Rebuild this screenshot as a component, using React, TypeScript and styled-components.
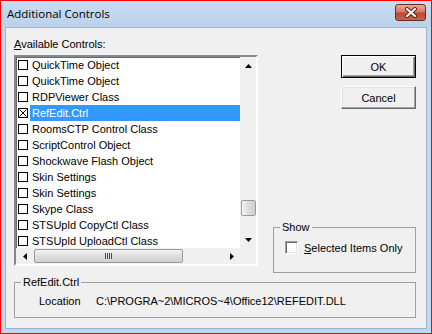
import React from "react";
import styled, { createGlobalStyle } from "styled-components";

const Global = createGlobalStyle`
  html, body { margin: 0; padding: 0; background: #ffffff; }
  * { box-sizing: border-box; }
`;

const UI = `"Liberation Sans", Arial, sans-serif`;

const Window = styled.div`
  width: 432px;
  height: 334px;
  border: 1px solid #ff0000;
  background: #c3d7ed;
  display: flex;
  flex-direction: column;
  font-family: ${UI};
  font-size: 11px;
  color: #000;
`;

const TitleBar = styled.div`
  height: 26px;
  flex: none;
  display: flex;
  align-items: center;
  justify-content: space-between;
  padding: 0 5px 0 6px;
  background: linear-gradient(#c8dcf2, #bcd2ea);
`;

const Title = styled.span`
  font-family: "Open Sans", "Liberation Sans", sans-serif;
  font-size: 11.5px;
  color: #000;
  margin-top: -2px;
`;

const CloseButton = styled.div`
  width: 31px;
  height: 17px;
  margin-top: -4px;
  border: 1px solid #6d2a22;
  border-radius: 3px;
  background: linear-gradient(#e8a698 0%, #d77a68 45%, #c0472f 55%, #c86450 100%);
  display: flex;
  align-items: center;
  justify-content: center;
`;

const Client = styled.div`
  flex: 1;
  margin: 0 4px 4px 4px;
  background: #f0f0f0;
  border: 1px solid #9db3cf;
  padding: 10px 10px 0 8px;
  display: flex;
  flex-direction: column;
`;

const TopRow = styled.div`
  display: flex;
  justify-content: space-between;
  height: 235px;
`;

const LeftCol = styled.div`
  width: 244px;
  display: flex;
  flex-direction: column;
`;

const Label = styled.div`
  height: 13px;
  line-height: 13px;
  margin-bottom: 4px;
  u { text-decoration: underline; }
`;

const ListBox = styled.div`
  height: 211px;
  border: 2px solid;
  border-color: #828790 #ffffff #ffffff #828790;
  box-shadow: inset 1px 1px 0 #696969;
  display: grid;
  grid-template-columns: 1fr 16px;
  grid-template-rows: 1fr 16px;
  background: #fff;
`;

const Rows = styled.div`
  display: flex;
  flex-direction: column;
  overflow: hidden;
`;

const Row = styled.div`
  height: 16px;
  flex: none;
  display: flex;
  align-items: center;
  padding-left: 2px;
`;

const Box = styled.span`
  width: 10px;
  height: 10px;
  border: 1px solid #000;
  background: #fff;
  flex: none;
  display: flex;
  align-items: center;
  justify-content: center;
`;

const ItemText = styled.span<{ $sel?: boolean }>`
  flex: 1;
  height: 16px;
  line-height: 16px;
  margin-left: 2px;
  padding-left: 2px;
  white-space: nowrap;
  background: ${(p) => (p.$sel ? "#3399ff" : "transparent")};
  color: ${(p) => (p.$sel ? "#fff" : "#000")};
`;

const VScroll = styled.div`
  background: #f0f0f0;
  display: flex;
  flex-direction: column;
  align-items: center;
`;

const HScroll = styled.div`
  background: #f0f0f0;
  display: flex;
  align-items: center;
`;

const Corner = styled.div`
  background: #f0f0f0;
`;

const ArrowCell = styled.div<{ $h?: boolean }>`
  width: ${(p) => (p.$h ? "17px" : "16px")};
  height: ${(p) => (p.$h ? "16px" : "17px")};
  flex: none;
  display: flex;
  align-items: center;
  justify-content: center;
`;

const Track = styled.div<{ $h?: boolean }>`
  flex: 1;
  display: flex;
  flex-direction: ${(p) => (p.$h ? "row" : "column")};
  align-items: center;
`;

const Thumb = styled.div<{ $h?: boolean }>`
  width: ${(p) => (p.$h ? "149px" : "15px")};
  height: ${(p) => (p.$h ? "14px" : "16px")};
  border: 1px solid #9a9a9a;
  border-radius: 2px;
  background: linear-gradient(${(p) => (p.$h ? "180deg" : "90deg")}, #f3f3f3, #dedede 50%, #d0d0d0);
  display: flex;
  align-items: center;
  justify-content: center;
  gap: 1px;
`;

const Grip = styled.span`
  width: 1px;
  height: 6px;
  background: #4a4a4a;
`;

const RightCol = styled.div`
  width: 143px;
  padding-top: 17px;
  display: flex;
  flex-direction: column;
  justify-content: space-between;
  align-items: flex-end;
`;

const Buttons = styled.div`
  display: flex;
  flex-direction: column;
  gap: 8px;
`;

const Button = styled.div<{ $default?: boolean }>`
  width: 75px;
  height: 23px;
  display: flex;
  align-items: center;
  justify-content: center;
  background: #f0f0f0;
  border: 1px solid;
  border-color: ${(p) => (p.$default ? "#000" : "#ffffff #696969 #696969 #ffffff")};
  box-shadow: ${(p) =>
    p.$default
      ? "inset 1px 1px 0 #fff, inset -1px -1px 0 #696969, inset -2px -2px 0 #a0a0a0"
      : "inset -1px -1px 0 #a0a0a0, inset 1px 1px 0 #e3e3e3"};
  font-size: 11px;
`;

const Group = styled.fieldset<{ $w: number; $h: number }>`
  width: ${(p) => p.$w}px;
  height: ${(p) => p.$h}px;
  margin: 0;
  padding: 0;
  border: 1px solid #a0a0a0;
  min-width: 0;
`;

const Legend = styled.legend`
  margin-left: 6px;
  padding: 0 2px;
  line-height: 13px;
  font-size: 11px;
`;

const ShowRow = styled.div`
  display: flex;
  align-items: center;
  gap: 6px;
  padding: 7px 0 0 11px;
  u { text-decoration: underline; }
`;

const BigBox = styled.span`
  width: 13px;
  height: 13px;
  border: 1px solid;
  border-color: #a0a0a0 #fff #fff #a0a0a0;
  box-shadow: inset 1px 1px 0 #696969, inset -1px -1px 0 #e3e3e3;
  background: #fff;
  flex: none;
`;

const BottomGroupWrap = styled.div`
  margin-top: 3px;
`;

const InfoRow = styled.div`
  display: flex;
  padding: 6px 0 0 24px;
  line-height: 13px;
`;

const InfoKey = styled.span`
  width: 57px;
`;

const UpArrow = () => (
  <svg width="7" height="4" viewBox="0 0 7 4"><path d="M3.5 0 L7 4 L0 4 Z" fill="#000" /></svg>
);
const DownArrow = () => (
  <svg width="7" height="4" viewBox="0 0 7 4"><path d="M0 0 L7 0 L3.5 4 Z" fill="#000" /></svg>
);
const LeftArrow = () => (
  <svg width="4" height="7" viewBox="0 0 4 7"><path d="M4 0 L4 7 L0 3.5 Z" fill="#000" /></svg>
);
const RightArrow = () => (
  <svg width="4" height="7" viewBox="0 0 4 7"><path d="M0 0 L4 3.5 L0 7 Z" fill="#000" /></svg>
);

const items = [
  "QuickTime Object",
  "QuickTime Object",
  "RDPViewer Class",
  "RefEdit.Ctrl",
  "RoomsCTP Control Class",
  "ScriptControl Object",
  "Shockwave Flash Object",
  "Skin Settings",
  "Skin Settings",
  "Skype Class",
  "STSUpld CopyCtl Class",
  "STSUpld UploadCtl Class",
];

export default function App() {
  return (
    <>
      <Global />
      <Window>
        <TitleBar>
          <Title>Additional Controls</Title>
          <CloseButton>
            <svg width="14" height="11" viewBox="0 0 14 11">
              <path d="M3 2 L11 9 M11 2 L3 9" stroke="#5a1a14" strokeWidth="4" strokeLinecap="round" />
              <path d="M3 2 L11 9 M11 2 L3 9" stroke="#ffffff" strokeWidth="2.2" strokeLinecap="round" />
            </svg>
          </CloseButton>
        </TitleBar>
        <Client>
          <TopRow>
            <LeftCol>
              <Label>
                <u>A</u>vailable Controls:
              </Label>
              <ListBox>
                <Rows>
                  {items.map((t, i) => (
                    <Row key={i}>
                      <Box>
                        {i === 3 && (
                          <svg width="8" height="8" viewBox="0 0 8 8">
                            <path d="M0.5 0.5 L7.5 7.5 M7.5 0.5 L0.5 7.5" stroke="#000" strokeWidth="1" />
                          </svg>
                        )}
                      </Box>
                      <ItemText $sel={i === 3}>{t}</ItemText>
                    </Row>
                  ))}
                </Rows>
                <VScroll>
                  <ArrowCell><UpArrow /></ArrowCell>
                  <Track>
                    <Thumb style={{ marginTop: 126 }} />
                  </Track>
                  <ArrowCell><DownArrow /></ArrowCell>
                </VScroll>
                <HScroll>
                  <ArrowCell $h><LeftArrow /></ArrowCell>
                  <Track $h>
                    <Thumb $h style={{ marginLeft: 1 }}>
                      <Grip /><Grip /><Grip /><Grip />
                    </Thumb>
                  </Track>
                  <ArrowCell $h><RightArrow /></ArrowCell>
                </HScroll>
                <Corner />
              </ListBox>
            </LeftCol>
            <RightCol>
              <Buttons>
                <Button $default>OK</Button>
                <Button>Cancel</Button>
              </Buttons>
              <Group $w={143} $h={52}>
                <Legend>Show</Legend>
                <ShowRow>
                  <BigBox />
                  <span>
                    <u>S</u>elected Items Only
                  </span>
                </ShowRow>
              </Group>
            </RightCol>
          </TopRow>
          <BottomGroupWrap>
            <Group $w={402} $h={42}>
              <Legend>RefEdit.Ctrl</Legend>
              <InfoRow>
                <InfoKey>Location</InfoKey>
                <span>C:\PROGRA~2\MICROS~4\Office12\REFEDIT.DLL</span>
              </InfoRow>
            </Group>
          </BottomGroupWrap>
        </Client>
      </Window>
    </>
  );
}
